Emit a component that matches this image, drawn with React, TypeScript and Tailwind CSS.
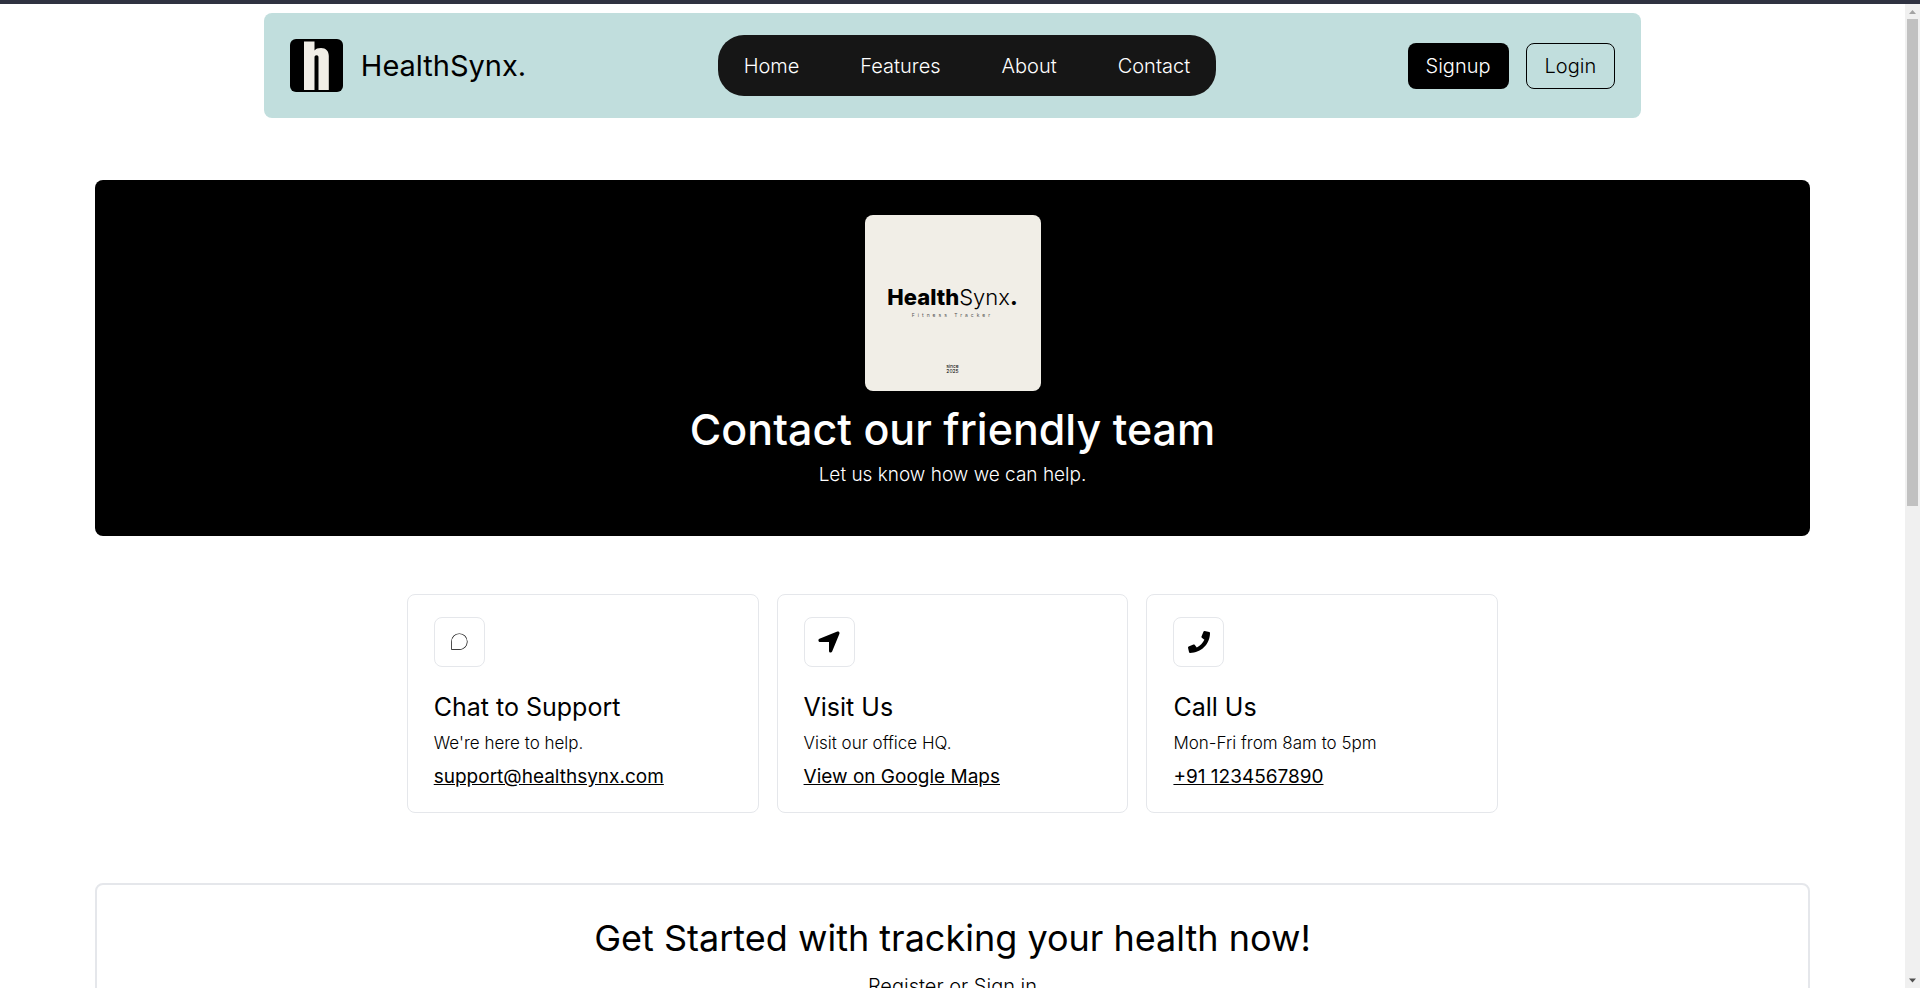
import React from "react";
import { PiChatTeardropThin } from "react-icons/pi";
import { FaLocationArrow } from "react-icons/fa6";
import { FaPhone } from "react-icons/fa";

function LogoMark() {
  return (
    <svg viewBox="0 0 53 53" className="size-[53px] rounded-md" aria-hidden="true">
      <rect width="53" height="53" fill="#000" />
      <path
        d="M14 2.5H24.5V11.5C25.7 9.8 28 9 31 9C36 9 38.8 12 38.8 17V51H28.5V18.5C28.5 17 28 16.300 26.600 16.300C25.200 16.300 24.500 17 24.500 18.500V51H14Z"
        fill="#f1eee7"
      />
    </svg>
  );
}

const links = ["Home", "Features", "About", "Contact"];

function Navbar() {
  return (
    <header className="mx-auto mt-[9px] flex h-[105px] w-[72.3%] items-center justify-between rounded-lg bg-[#c1dedd] px-[26px]">
      <a href="#home" className="flex items-center gap-[18px] text-[29px] leading-9">
        <LogoMark />
        <span>HealthSynx.</span>
      </a>
      <nav className="flex h-[61px] items-center gap-[61px] rounded-[26px] bg-[#161616] px-[26px] text-[20px] font-light text-white">
        {links.map((label) => (
          <a key={label} href={`#${label.toLowerCase()}`}>
            {label}
          </a>
        ))}
      </nav>
      <div className="flex gap-[17px] text-[20px] font-light">
        <button className="h-[46px] rounded-lg bg-black px-[18px] text-white">Signup</button>
        <button className="h-[46px] rounded-lg border border-black px-[18px]">Login</button>
      </div>
    </header>
  );
}

function Hero() {
  return (
    <section className="mx-auto mt-[62px] flex w-[90%] flex-col items-center rounded-lg bg-black pt-[35px] pb-[47px] text-white">
      <div className="flex size-[176px] flex-col items-center rounded-lg bg-[#f1eee7] pt-[68px] text-black">
        <p className="text-[22px] leading-7 whitespace-nowrap">
          <span className="font-extrabold">Health</span>
          <span className="font-light">Synx</span>
          <span className="font-extrabold">.</span>
        </p>
        <p className="text-[5px] leading-2 tracking-[3px] text-neutral-600">Fitness Tracker</p>
        <p className="mt-[45px] text-center text-[5px] leading-[5px]">
          since
          <br />
          2025
        </p>
      </div>
      <h1 className="mt-[14px] text-[43px] leading-12 font-medium">Contact our friendly team</h1>
      <p className="mt-2 text-[19px] leading-7 font-light">Let us know how we can help.</p>
    </section>
  );
}

const cards = [
  {
    icon: <PiChatTeardropThin size={22} />,
    title: "Chat to Support",
    text: "We're here to help.",
    link: "support@healthsynx.com",
    href: "mailto:support@healthsynx.com",
  },
  {
    icon: <FaLocationArrow size={26} />,
    title: "Visit Us",
    text: "Visit our office HQ.",
    link: "View on Google Maps",
    href: "#maps",
  },
  {
    icon: <FaPhone size={22} />,
    title: "Call Us",
    text: "Mon-Fri from 8am to 5pm",
    link: "+91 1234567890",
    href: "tel:+911234567890",
  },
];

function ContactCards() {
  return (
    <section className="mx-auto mt-[58px] grid w-[57.3%] grid-cols-3 gap-[18px]">
      {cards.map((card) => (
        <article
          key={card.title}
          className="flex flex-col items-start rounded-lg border border-gray-200 px-[26px] pt-[22px] pb-[23px]"
        >
          <div className="grid h-[50px] w-[51px] place-items-center rounded-lg border border-gray-200">
            {card.icon}
          </div>
          <h2 className="mt-6 text-[25px] leading-8">{card.title}</h2>
          <p className="mt-2 text-[17px] leading-6 font-light">{card.text}</p>
          <a href={card.href} className="mt-[10px] text-[19px] leading-6 underline">
            {card.link}
          </a>
        </article>
      ))}
    </section>
  );
}

function GetStarted() {
  return (
    <section className="mx-auto mt-[70px] flex w-[90%] flex-col items-center rounded-lg border-2 border-gray-200 pt-[33px] pb-12">
      <h2 className="text-[36px] leading-10">Get Started with tracking your health now!</h2>
      <p className="mt-[14px] text-[20px] leading-7 font-light">Register or Sign in</p>
    </section>
  );
}

function ScrollTrack() {
  return (
    <div className="flex w-[15px] shrink-0 flex-col items-center bg-[#f0f0f0]" aria-hidden="true">
      <svg viewBox="0 0 15 15" className="size-[15px]">
        <path d="M4 10L7.500 6L11 10Z" fill="#a3a3a3" />
      </svg>
      <div className="flex w-[11px] flex-1 flex-col">
        <div className="basis-[51%] bg-[#c1c1c1]" />
      </div>
      <svg viewBox="0 0 15 15" className="size-[15px]">
        <path d="M4 5.500L7.500 9.500L11 5.500Z" fill="#505050" />
      </svg>
    </div>
  );
}

export default function App() {
  return (
    <div className="flex h-screen flex-col overflow-hidden bg-white font-[Inter,sans-serif] text-black">
      <div className="h-1 shrink-0 bg-[#2f3241]" />
      <div className="flex min-h-0 flex-1">
        <main className="min-w-0 flex-1 overflow-hidden">
          <Navbar />
          <Hero />
          <ContactCards />
          <GetStarted />
        </main>
        <ScrollTrack />
      </div>
    </div>
  );
}
